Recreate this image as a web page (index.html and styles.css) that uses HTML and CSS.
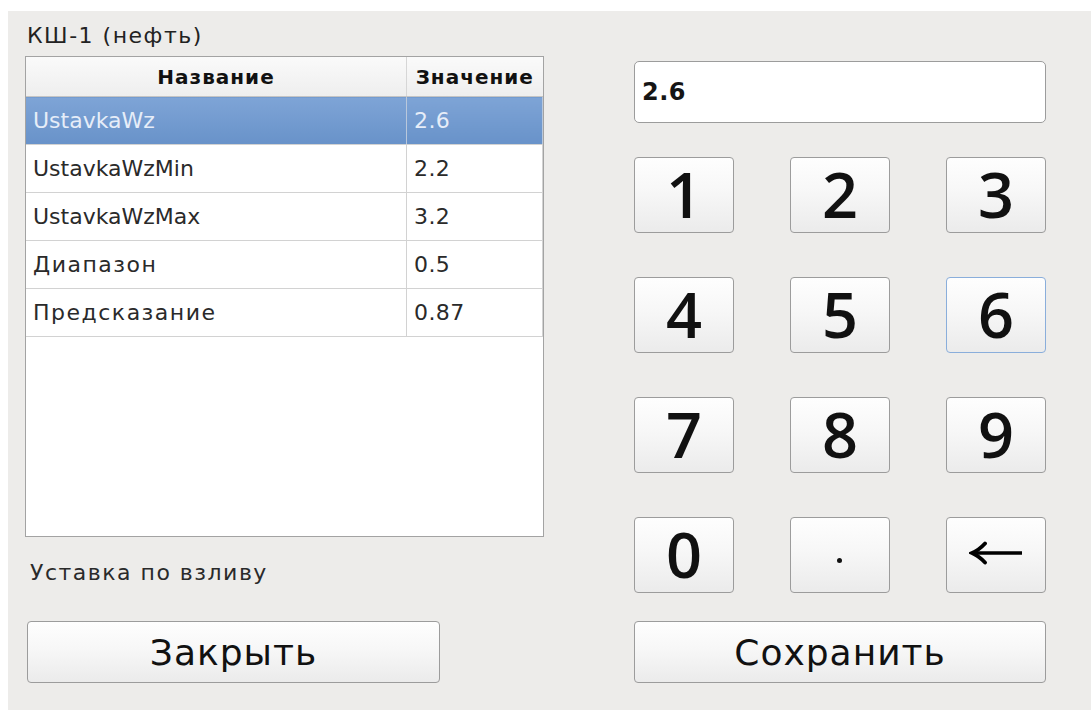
FILE: index.html
```html
<!DOCTYPE html>
<html lang="ru">
<head>
<meta charset="utf-8">
<title>КШ-1 (нефть)</title>
<link rel="stylesheet" href="styles.css">
</head>
<body>
<div class="window">
  <section class="left">
    <div class="caption ru">КШ-1 (нефть)</div>
    <div class="table-frame">
      <table class="params">
        <thead>
          <tr><th class="c-name">Название</th><th class="c-val">Значение</th></tr>
        </thead>
        <tbody>
          <tr class="selected"><td class="lat">UstavkaWz</td><td class="num">2.6</td></tr>
          <tr><td class="lat">UstavkaWzMin</td><td class="num">2.2</td></tr>
          <tr><td class="lat">UstavkaWzMax</td><td class="num">3.2</td></tr>
          <tr><td class="ru">Диапазон</td><td class="num">0.5</td></tr>
          <tr><td class="ru">Предсказание</td><td class="num">0.87</td></tr>
        </tbody>
      </table>
    </div>
    <div class="hint ru">Уставка по взливу</div>
    <button class="btn wide close">Закрыть</button>
  </section>
  <section class="right">
    <div class="display">2.6</div>
    <div class="keypad">
      <button class="btn key">1</button>
      <button class="btn key">2</button>
      <button class="btn key">3</button>
      <button class="btn key">4</button>
      <button class="btn key">5</button>
      <button class="btn key focus">6</button>
      <button class="btn key">7</button>
      <button class="btn key">8</button>
      <button class="btn key">9</button>
      <button class="btn key">0</button>
      <button class="btn key dot"><span class="dot-mark"></span></button>
      <button class="btn key back" aria-label="←">
        <svg width="56" height="24" viewBox="0 0 56 24">
          <path d="M6 12 H53" stroke="#000" stroke-width="3.6" fill="none"/>
          <path d="M16 2.5 Q10 9 3 12 Q10 15 16 21.5" stroke="#000" stroke-width="3.8" fill="none" stroke-linecap="round"/>
        </svg>
      </button>
    </div>
    <button class="btn wide save">Сохранить</button>
  </section>
</div>
</body>
</html>
```
FILE: styles.css
```css
html, body {
  margin: 0;
  padding: 0;
  background: #ffffff;
}

body {
  font-family: "DejaVu Sans", "Liberation Sans", sans-serif;
  color: #1b1b1b;
}

.window {
  margin: 11px 0 0 8px;
  height: 699px;
  background: #edecea;
  display: flex;
  padding-left: 17px;
  box-sizing: border-box;
}

/* text spacing per script */
.ru { letter-spacing: 1.5px; }
.lat { letter-spacing: 0; }
.num { letter-spacing: 0.4px; }

/* ---- left pane: parameter table ---- */
.left {
  width: 519px;
  display: flex;
  flex-direction: column;
}

.caption {
  padding: 10px 0 0 2px;
  height: 45px;
  line-height: 30px;
  font-size: 22px;
  box-sizing: border-box;
  color: #222;
}

.table-frame {
  height: 481px;
  border: 1px solid #a3a3a3;
  background: #ffffff;
  box-sizing: border-box;
  padding-right: 1px;
}

.params {
  border-collapse: collapse;
  table-layout: fixed;
  width: 517px;
  font-size: 22px;
}

.params th {
  height: 39px;
  padding: 0;
  font-weight: bold;
  font-size: 20px;
  letter-spacing: 1px;
  text-align: center;
  background: linear-gradient(#fafafa, #eeeeee);
  border-bottom: 1px solid #c4c4c4;
  color: #111;
}

.params th.c-name {
  width: 380px;
}

.params th.c-val {
  border-left: 1px solid #d6d6d6;
}

.params td {
  height: 47px;
  padding: 0 0 0 7px;
  border-bottom: 1px solid #d2d2d2;
  border-right: 1px solid #d2d2d2;
  color: #2a2a2a;
  white-space: nowrap;
}

.params tr.selected td {
  background: linear-gradient(#7ea4d6, #6892c9);
  color: #e6edf8;
  border-right-color: #b9c8dc;
}

.hint {
  height: 84px;
  line-height: 72px;
  padding-left: 5px;
  font-size: 22px;
  color: #2a2a2a;
}

/* ---- buttons ---- */
.btn {
  font-family: "DejaVu Sans", "Liberation Sans", sans-serif;
  color: #111;
  border: 1px solid #9c9c9c;
  border-radius: 4px;
  background: linear-gradient(#fefefe 0%, #f7f7f7 45%, #ebebeb 100%);
  padding: 0;
  margin: 0;
  cursor: pointer;
}

.wide {
  height: 62px;
  font-size: 36px;
  letter-spacing: 1px;
}

.close {
  width: 413px;
  margin-left: 2px;
}

.save {
  width: 412px;
}

/* ---- right pane: keypad ---- */
.right {
  margin-left: 90px;
  width: 412px;
  display: flex;
  flex-direction: column;
}

.display {
  margin-top: 50px;
  height: 62px;
  border: 1px solid #9c9c9c;
  border-radius: 5px;
  background: #ffffff;
  box-sizing: border-box;
  padding-left: 7px;
  line-height: 60px;
  font-size: 24px;
  letter-spacing: 0.5px;
  font-weight: bold;
  color: #151515;
}

.keypad {
  margin-top: 34px;
  display: grid;
  grid-template-columns: 100px 100px 100px;
  grid-auto-rows: 76px;
  column-gap: 56px;
  row-gap: 44px;
  margin-bottom: 28px;
}

.key {
  font-family: "Open Sans", "Noto Sans", sans-serif;
  font-size: 63px;
  font-weight: 600;
  line-height: 1;
  padding-bottom: 4px;
}

.key.focus {
  border-color: #8aaedb;
}

.key.dot,
.key.back {
  display: flex;
  align-items: center;
  justify-content: center;
}

.dot-mark {
  width: 5px;
  height: 5px;
  border-radius: 50%;
  background: #111;
  margin-top: 14px;
  margin-right: 2px;
}

.key.back svg {
  display: block;
  margin-left: 1px;
}
```
